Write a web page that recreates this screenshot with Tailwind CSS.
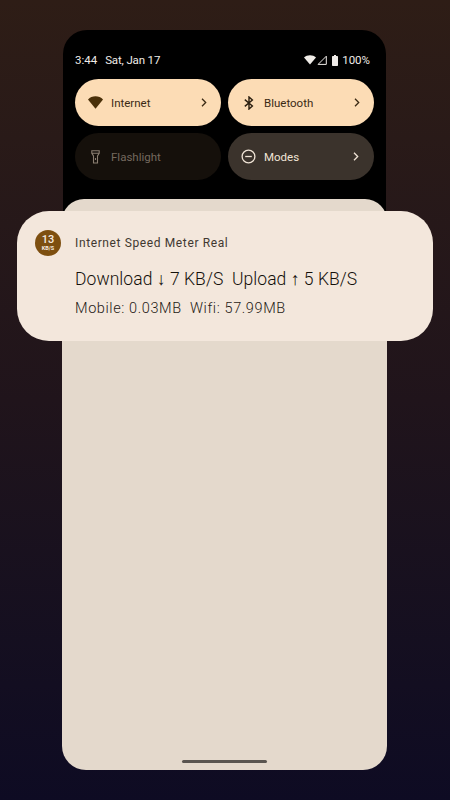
<!DOCTYPE html>
<html lang="en">
<head>
    <meta charset="UTF-8" />
    <meta name="viewport" content="width=device-width, initial-scale=1.0" />
    <title>Internet Speed Meter</title>
    <script src="https://cdn.jsdelivr.net/npm/@tailwindcss/browser@4"></script>
</head>
<body class="m-0">
    <div class="relative w-[450px] h-[800px] overflow-hidden bg-gradient-to-b from-[#2e1d16] via-[#20141b] to-[#0e0b23] font-['Roboto',sans-serif] pt-[30px]">

        <!-- shade -->
        <div class="relative w-[325px] ml-[62px] h-[740px] flex flex-col">
            <div class="bg-black rounded-t-[24px] h-[190px] mx-[1px] px-3 flex flex-col">
                <div class="flex items-center justify-between h-[19px] mt-[20px] text-[11.500px] leading-[19px] text-[#f0ece8]">
                    <div class="flex gap-2 pt-px">
                        <span>3:44</span>
                        <span class="tracking-[-0.15px]">Sat, Jan 17</span>
                    </div>
                    <div class="flex items-center mr-[4px] pt-px">
                        <svg class="w-[12px] h-[10px] mr-[1px]" viewBox="0 0 12 10"><path d="M0 2.600C1.600 1.100 3.700.3 6 .3s4.400.8 6 2.300L6 9.600z" fill="#f0ece8"/></svg>
                        <svg class="w-[10px] h-[10px] mr-[5px]" viewBox="0 0 10 10"><path d="M9.300 1.200V9.400H1.100z" fill="none" stroke="#f0ece8" stroke-width="1"/></svg>
                        <svg class="w-[6px] h-[11px] mr-[4px]" viewBox="0 0 6 11"><path d="M2 0h2v1h1.300c.4 0 .7.3.7.7v8.600c0 .4-.3.7-.7.7H.7c-.4 0-.7-.3-.7-.7V1.700C0 1.300.3 1 .7 1H2z" fill="#f0ece8"/></svg>
                        <span>100%</span>
                    </div>
                </div>

                <div class="grid grid-cols-2 gap-x-[7px] gap-y-[7px] mt-[10px]">
                    <div class="h-[47px] rounded-full bg-[#fcdcb5] flex items-center pl-[13px] pr-[14px] text-[#3b2a14]">
                        <svg class="w-[15px] h-[13px]" viewBox="0 0 16 13" preserveAspectRatio="none"><path d="M0 3.500C2.100 1.400 4.900.3 8 .3s5.900 1.100 8 3.200L8 12.700z" fill="#4a3009"/></svg>
                        <span class="ml-[8px] pt-[2px] text-[11.500px] flex-1">Internet</span>
                        <svg class="w-[6px] h-[9px]" viewBox="0 0 6 9"><path d="M1 .8l3.700 3.700L1 8.200" fill="none" stroke="#3b2a14" stroke-width="1.300"/></svg>
                    </div>
                    <div class="h-[47px] rounded-full bg-[#fcdcb5] flex items-center pl-[16px] pr-[14px] text-[#3b2a14]">
                        <svg class="w-[10px] h-[14px]" viewBox="0 0 10 14"><path d="M.8 3.600L8.400 10 5 13V1l3.400 3L.8 10.400" fill="none" stroke="#2b1f10" stroke-width="1.400"/></svg>
                        <span class="ml-[10px] pt-[2px] text-[11.500px] flex-1">Bluetooth</span>
                        <svg class="w-[6px] h-[9px]" viewBox="0 0 6 9"><path d="M1 .8l3.700 3.700L1 8.200" fill="none" stroke="#3b2a14" stroke-width="1.300"/></svg>
                    </div>
                    <div class="h-[47px] rounded-full bg-[#15100b] flex items-center pl-[16px] pr-[14px] text-[#74695e]">
                        <svg class="w-[9px] h-[14px]" viewBox="0 0 9 14"><path d="M.8.800h7.400v2.600L6.500 6v7h-4V6L.8 3.400zM.8 3.200h7.400M4.500 8v2" fill="none" stroke="#8a7e71" stroke-width="1.100"/></svg>
                        <span class="ml-[11px] pt-[2px] text-[11.500px] flex-1">Flashlight</span>
                    </div>
                    <div class="h-[47px] rounded-full bg-[#3b332c] flex items-center pl-[13px] pr-[15px] text-[#f0e4d6]">
                        <svg class="w-[15px] h-[15px]" viewBox="0 0 15 15"><circle cx="7.500" cy="7.500" r="6.400" fill="none" stroke="#f0e4d6" stroke-width="1.300"/><path d="M4.200 7.500h6.600" stroke="#f0e4d6" stroke-width="1.300"/></svg>
                        <span class="ml-[8px] pt-[2px] text-[11.500px] flex-1">Modes</span>
                        <svg class="w-[6px] h-[9px]" viewBox="0 0 6 9"><path d="M1 .8l3.700 3.700L1 8.200" fill="none" stroke="#f0e4d6" stroke-width="1.300"/></svg>
                    </div>
                </div>
            </div>
            <!-- sheet -->
            <div class="relative -mt-[21px] flex-1 bg-[#e4d9cc] rounded-[24px] rounded-t-[22px] flex flex-col justify-end items-center pb-[7px]">
                <div class="w-[85px] h-[3px] rounded-full bg-[#5a5550]"></div>
            </div>
        </div>

        <!-- heads-up notification -->
        <div class="absolute left-[17px] top-[211px] w-[416px] h-[130px] bg-[#f3e7dc] rounded-[32px] pl-[18px] pt-[19px]">
            <div class="flex items-center h-[26px]">
                <div class="w-[26px] h-[26px] rounded-full bg-[#7d4f10] flex flex-col items-center justify-center text-[#f5ebe0] leading-none">
                    <span class="text-[11px] leading-[10px] font-medium">13</span>
                    <span class="text-[5.500px] leading-[7px] font-bold">KB/S</span>
                </div>
                <span class="ml-[14px] text-[12px] tracking-[0.62px] text-[#3f3830]">Internet Speed Meter Real</span>
            </div>
            <p class="ml-[40px] mt-[11px] text-[17.500px] leading-[24px] font-light tracking-[0.06px] text-[#14100b] whitespace-pre">Download ↓ 7 KB/S  Upload ↑ 5 KB/S</p>
            <p class="ml-[40px] mt-[8px] text-[14.500px] tracking-[0.6px] leading-[20px] font-light text-[#1f1a15] whitespace-pre">Mobile: 0.03MB  Wifi: 57.99MB</p>
        </div>
    </div>
</body>
</html>
